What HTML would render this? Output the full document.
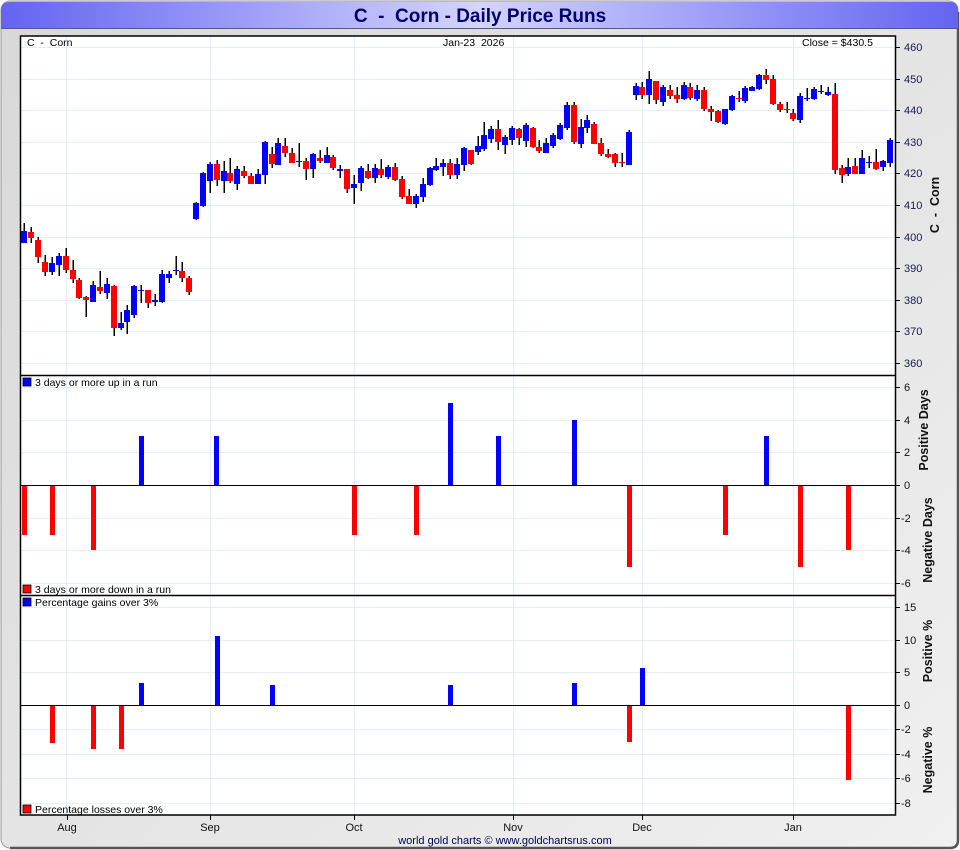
<!DOCTYPE html>
<html><head><meta charset="utf-8"><style>
html,body{margin:0;padding:0;width:960px;height:850px;overflow:hidden;background:#fff;font-family:"Liberation Sans",sans-serif}
text{white-space:pre}
</style></head><body>
<svg id="s" width="960" height="850" xmlns="http://www.w3.org/2000/svg" font-family="Liberation Sans, sans-serif">
<defs>
<linearGradient id="tb" x1="0" x2="1" y1="0" y2="0">
<stop offset="0" stop-color="#6464f0"/><stop offset="0.5" stop-color="#d4d4ff"/><stop offset="1" stop-color="#6464f0"/>
</linearGradient>
<linearGradient id="bg" x1="0" x2="1" y1="0" y2="1">
<stop offset="0" stop-color="#d8d8d8"/><stop offset="0.6" stop-color="#e6e6e6"/><stop offset="1" stop-color="#f0f0f0"/>
</linearGradient>
</defs>
<rect x="1" y="1" width="957" height="847" rx="9" fill="url(#bg)" stroke="#9a9a9a" stroke-width="1"/>
<path d="M958 12 V840 Q958 848 950 848 H10" fill="none" stroke="#555" stroke-width="2.5"/>
<path d="M1 28 V10 Q1 2 10 2 H950 Q958 2 958 10 V28 Z" fill="url(#tb)"/>
<line x1="1" y1="28.5" x2="958" y2="28.5" stroke="#555588" stroke-width="1"/>
<text x="480" y="22" text-anchor="middle" font-size="19" font-weight="bold" fill="#00006e" xml:space="preserve">C  -  Corn - Daily Price Runs</text>
<rect x="20" y="36" width="875" height="779" fill="#fff"/>
<g id="grid" stroke="#e2eef8" stroke-width="1"></g>
<g id="cd"></g>
<g id="bars"></g>
<g fill="none" stroke="#000" stroke-width="1.5">
<rect x="20.5" y="36" width="875" height="779"/>
<line x1="20" y1="375.5" x2="895" y2="375.5"/>
<line x1="20" y1="595.5" x2="895" y2="595.5"/>
<line x1="20" y1="485.5" x2="895" y2="485.5" stroke-width="1"/>
<line x1="20" y1="705.5" x2="895" y2="705.5" stroke-width="1"/>
</g>
<g id="ax" font-size="11" fill="#111"></g>
<g font-size="10.5" fill="#000">
<text x="27" y="46" xml:space="preserve">C  -  Corn</text>
<text x="443" y="46" xml:space="preserve">Jan-23  2026</text>
<text x="802" y="46">Close = $430.5</text>
<rect x="23" y="378" width="8" height="8" fill="#00f" stroke="#000" stroke-width="0.8"/>
<text x="35" y="386">3 days or more up in a run</text>
<rect x="23" y="585" width="8" height="8" fill="#f00" stroke="#000" stroke-width="0.8"/>
<text x="35" y="593">3 days or more down in a run</text>
<rect x="23" y="598" width="8" height="8" fill="#00f" stroke="#000" stroke-width="0.8"/>
<text x="35" y="606">Percentage gains over 3%</text>
<rect x="23" y="805" width="8" height="8" fill="#f00" stroke="#000" stroke-width="0.8"/>
<text x="35" y="813">Percentage losses over 3%</text>
</g>
<g font-size="12.5" font-weight="bold" fill="#111" text-anchor="middle">
<text transform="translate(939,205) rotate(-90)" xml:space="preserve">C  -  Corn</text>
<text transform="translate(928,430) rotate(-90)">Positive Days</text>
<text transform="translate(932,540) rotate(-90)">Negative Days</text>
<text transform="translate(932,651) rotate(-90)">Positive %</text>
<text transform="translate(932,760) rotate(-90)">Negative %</text>
</g>
<text x="505" y="844" text-anchor="middle" font-size="11" fill="#00005a">world gold charts © www.goldchartsrus.com</text>
</svg>
<script>
var NS="http://www.w3.org/2000/svg";
function el(p,t,a,txt){var e=document.createElementNS(NS,t);for(var k in a)e.setAttribute(k,a[k]);if(txt!=null)e.textContent=txt;document.getElementById(p).appendChild(e);return e;}
var vx=[66,210,354,513,642,793];
vx.forEach(function(x){el("grid","line",{x1:x+.5,y1:36,x2:x+.5,y2:815});});
for(var p=360;p<=460;p+=10){var y=Math.round(47+(460-p)*3.16);el("grid","line",{x1:20,y1:y+.5,x2:895,y2:y+.5});
el("ax","line",{x1:895,y1:y+.5,x2:900,y2:y+.5,stroke:"#000"});el("ax","text",{x:904,y:y+4,fill:"#1a1a50"},p);}
var rl=[[6,387],[4,420],[2,452],[0,485],[-2,518],[-4,550],[-6,583]];
rl.forEach(function(r){if(r[0]!=0)el("grid","line",{x1:20,y1:r[1]+.5,x2:895,y2:r[1]+.5});el("ax","line",{x1:895,y1:r[1]+.5,x2:900,y2:r[1]+.5,stroke:"#000"});el("ax","text",{x:r[0]<0?901:904,y:r[1]+4},r[0]);});
var pl=[[15,607],[10,640],[5,672],[0,705],[-2,729],[-4,754],[-6,778],[-8,803]];
pl.forEach(function(r){if(r[0]!=0)el("grid","line",{x1:20,y1:r[1]+.5,x2:895,y2:r[1]+.5});el("ax","line",{x1:895,y1:r[1]+.5,x2:900,y2:r[1]+.5,stroke:"#000"});el("ax","text",{x:r[0]<0?901:904,y:r[1]+4},r[0]);});
var ml=[["Aug",67],["Sep",210],["Oct",354],["Nov",513],["Dec",642],["Jan",793]];
ml.forEach(function(m){el("ax","line",{x1:m[1]+.5,y1:815,x2:m[1]+.5,y2:820,stroke:"#000"});el("ax","text",{x:m[1],y:831,"text-anchor":"middle"},m[0]);});
var C=[[21,231,243,223,243,"b"],[28,232,238,227,243,"r"],[35,240,257,237,263,"r"],[42,262,272,255,276,"r"],[49,263,272,257,275,"b"],[56,256,265,253,276,"b"],[63,256,270,248,273,"r"],[70,270,279,260,283,"r"],[76,280,298,278,299,"r"],[83,297,300,296,317,"r"],[90,285,302,281,302,"b"],[97,287,291,271,294,"r"],[104,284,293,278,299,"b"],[111,286,328,285,336,"r"],[118,323,328,312,330,"b"],[124,310,322,305,334,"b"],[131,286,315,285,318,"b"],[138,290,291,285,303,"b"],[145,290,303,290,308,"r"],[152,300,302,294,306,"b"],[159,274,302,270,303,"b"],[166,274,278,271,283,"b"],[173,270,271,256,275,"b"],[179,271,278,262,282,"r"],[186,278,292,276,295,"r"],
[193,203,219,202,220,"b"],[200,173,206,172,207,"b"],[207,164,181,162,193,"b"],[214,164,180,160,186,"r"],[221,171,181,161,193,"b"],[227,173,181,158,183,"r"],[234,169,184,166,190,"b"],[241,171,176,166,178,"r"],[248,176,184,173,184,"r"],[255,174,184,169,184,"b"],[262,142,175,141,184,"b"],[269,154,164,147,168,"r"],[275,143,165,138,165,"b"],[282,146,153,138,157,"r"],[289,153,163,148,163,"r"],[296,161,162,143,167,"b"],[303,161,169,158,180,"r"],[310,154,169,153,178,"b"],[317,158,161,150,163,"r"],[324,155,163,147,163,"b"],[330,157,168,155,170,"r"],[337,169,171,165,178,"b"],[344,169,189,169,193,"r"],[351,184,188,175,204,"b"],[358,168,183,166,191,"b"],[365,171,178,164,179,"r"],[372,168,178,164,183,"b"],[378,169,175,159,178,"r"],[385,167,177,165,179,"b"],[392,167,180,163,181,"r"],[399,179,197,176,199,"r"],[406,196,204,189,204,"r"],[413,196,204,194,208,"b"],[420,184,197,178,202,"b"],[427,168,185,167,186,"b"],[433,166,170,158,171,"b"],[440,163,167,159,176,"b"],[447,163,175,159,179,"r"],[454,164,175,158,179,"b"],[461,148,165,147,171,"b"],[468,150,164,150,165,"r"],[475,146,152,136,155,"b"],[481,135,149,122,151,"b"],[488,129,139,126,143,"b"],[495,129,142,120,150,"r"],[502,137,145,135,154,"b"],[509,128,140,126,145,"b"],[516,129,138,128,145,"r"],[523,125,141,123,147,"b"],[530,128,147,127,148,"r"],
[536,147,151,140,153,"r"],[543,143,153,138,153,"b"],[550,135,146,133,148,"b"],[557,125,139,123,140,"b"],[564,105,128,102,130,"b"],[571,105,142,102,144,"r"],[578,127,144,119,148,"b"],[584,120,128,115,133,"b"],[591,124,144,122,144,"r"],[598,143,154,138,156,"r"],[605,154,157,149,158,"r"],[612,154,163,153,167,"r"],[619,162,163,153,167,"r"],[626,132,165,130,165,"b"],
[633,86,95,83,100,"b"],[639,87,95,82,99,"r"],[646,79,95,71,104,"b"],[653,81,100,81,104,"r"],[660,87,102,85,106,"b"],[667,90,96,85,99,"r"],[674,95,99,87,103,"r"],[681,85,99,82,100,"b"],[687,87,98,83,100,"r"],[694,90,99,85,101,"b"],[701,90,109,87,111,"r"],[708,109,112,106,121,"r"],[715,111,122,110,123,"r"],[722,109,124,109,125,"b"],[729,96,110,95,111,"b"],[736,98,99,91,102,"r"],[742,88,101,86,103,"b"],[749,87,91,86,91,"b"],[756,75,89,74,90,"b"],[763,75,80,69,84,"r"],[770,79,104,75,105,"r"],[777,104,110,102,112,"r"],[784,109,110,102,113,"r"],[790,113,119,109,121,"r"],[797,96,120,93,123,"b"],[804,98,99,88,101,"b"],[811,89,99,87,100,"b"],[818,91,92,85,94,"b"],[825,92,95,87,96,"b"],[832,94,170,83,174,"r"],[839,168,175,165,183,"r"],[845,167,174,158,176,"b"],[852,166,174,158,174,"r"],[859,158,174,150,174,"b"],[866,162,163,156,168,"b"],[873,162,169,149,170,"r"],[880,161,167,160,171,"b"],[887,140,163,138,167,"b"]];
C.forEach(function(c){var col=c[5]=="b"?"#0000ff":"#ff0000";
el("cd","rect",{x:c[0]+2.5,y:c[3],width:1.5,height:c[4]-c[3],fill:"#000"});
el("cd","rect",{x:c[0],y:c[1],width:6,height:Math.max(1,c[2]-c[1]),fill:col});});
function bar(x,y0,y1,col){el("bars","rect",{x:x-2,y:Math.min(y0,y1),width:5,height:Math.abs(y1-y0),fill:col});}
[[141,436],[216,436],[450,403],[498,436],[574,420],[766,436]].forEach(function(b){bar(b[0],485,b[1],"#00f");});
[[24,535],[52,535],[93,550],[354,535],[416,535],[629,567],[725,535],[800,567],[848,550]].forEach(function(b){bar(b[0],485,b[1],"#f00");});
[[141,683],[217,636],[272,685],[450,685],[574,683],[642,668]].forEach(function(b){bar(b[0],705,b[1],"#00f");});
[[52,743],[93,749],[121,749],[629,742],[848,780]].forEach(function(b){bar(b[0],705,b[1],"#f00");});
</script>
</body></html>
